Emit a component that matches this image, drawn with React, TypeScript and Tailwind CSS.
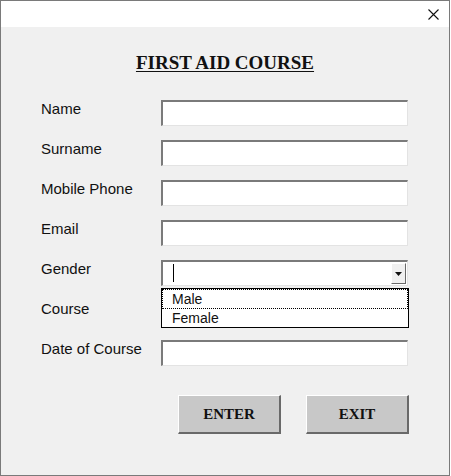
import React from "react";

const labelFont = { fontFamily: '"Liberation Sans", Tahoma, sans-serif' };
const serif = { fontFamily: '"Liberation Serif", "Times New Roman", serif' };

function Sunken({ children }: { children?: React.ReactNode }) {
  return (
    <div className="relative h-[26px] w-[247px] border-t-2 border-l-2 border-b border-r border-t-[#7a7a7a] border-l-[#7a7a7a] border-b-[#e3e3e3] border-r-[#e3e3e3] bg-white">
      {children}
    </div>
  );
}

function Row({ label, children }: { label: string; children?: React.ReactNode }) {
  return (
    <div className="flex items-start">
      <div className="w-[160px] shrink-0 whitespace-nowrap pl-[40px] text-[15px] leading-[18px] text-[#111]" style={labelFont}>
        {label}
      </div>
      <div className="relative">{children ?? <Sunken />}</div>
    </div>
  );
}

function Button({ text }: { text: string }) {
  return (
    <button
      className="flex h-[39px] w-[103px] items-center justify-center border-t border-l border-b-2 border-r-2 border-t-white border-l-white border-b-[#696969] border-r-[#696969] bg-[#c8c8c8] text-[15px] font-bold text-[#111]"
      style={serif}
    >
      {text}
    </button>
  );
}

export default function App() {
  return (
    <div className="h-[476px] w-[451px] bg-white">
      <div className="flex h-[476px] w-[450px] flex-col border border-[#7a7a7a] bg-[#f0f0f0]">
        <div className="flex h-[26px] items-center justify-end bg-white pr-[10px]">
          <svg width="11" height="11" viewBox="0 0 11 11">
            <path d="M0.5 0.5 L10.5 10.5 M10.5 0.5 L0.5 10.5" stroke="#111" strokeWidth="1.1" />
          </svg>
        </div>
        <h1
          className="mt-[25px] text-center text-[19px] leading-[22px] font-bold underline underline-offset-2 text-[#111]"
          style={serif}
        >
          FIRST AID COURSE
        </h1>
        <div className="mt-[26px] flex flex-col gap-[14px]">
          <Row label="Name" />
          <Row label="Surname" />
          <Row label="Mobile Phone" />
          <Row label="Email" />
          <Row label="Gender">
            <Sunken>
              <div className="absolute left-[10px] top-[2px] h-[18px] w-px bg-black" />
              <div className="absolute right-[1px] top-px flex h-[21px] w-[15px] items-center justify-center border border-t-white border-l-white border-b-[#696969] border-r-[#696969] bg-[#f0f0f0]">
                <svg width="7" height="4" viewBox="0 0 7 4">
                  <path d="M0 0 H7 L3.5 4 Z" fill="#111" />
                </svg>
              </div>
            </Sunken>
            <div
              className="absolute left-0 top-[28px] z-10 w-[248px] border border-black bg-white text-[14px] leading-[18px] text-[#111]"
              style={labelFont}
            >
              <div className="border border-dotted border-black pl-[9px]">Male</div>
              <div className="pl-[10px]">Female</div>
            </div>
          </Row>
          <Row label="Course" />
          <Row label="Date of Course" />
        </div>
        <div className="mt-[29px] flex justify-end gap-[25px] pr-[40px]">
          <Button text="ENTER" />
          <Button text="EXIT" />
        </div>
      </div>
    </div>
  );
}
